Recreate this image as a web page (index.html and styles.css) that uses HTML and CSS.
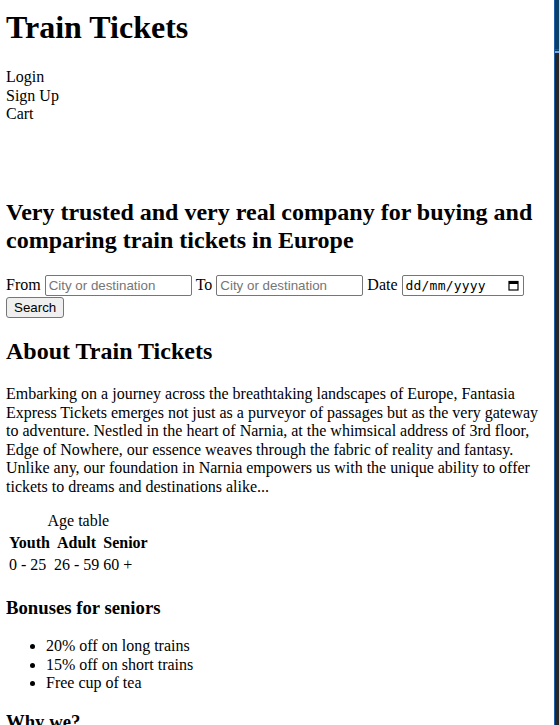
FILE: index.html
```html
<!DOCTYPE html>
<html lang="en">
<head>
<meta charset="utf-8">
<title>Train Tickets</title>
<link rel="stylesheet" href="styles.css">
</head>
<body>
<div class="page">
  <header class="site-header">
    <h1 class="brand">Train Tickets</h1>
    <nav>
      <ul class="nav-list">
        <li>Login</li>
        <li>Sign Up</li>
        <li>Cart</li>
      </ul>
    </nav>
  </header>

  <section class="hero">
    <h2>Very trusted and very real company for buying and comparing train tickets in Europe</h2>
    <form class="search-form">
      <label>From <input class="field" type="text" placeholder="City or destination"></label>
      <label>To <input class="field" type="text" placeholder="City or destination"></label>
      <label>Date <span class="date-field"><input class="date-input" type="text" placeholder="dd/mm/yyyy"><svg class="cal-icon" width="11" height="11" viewBox="0 0 11 11" aria-hidden="true"><rect x="1" y="1.5" width="9" height="8.5" fill="none" stroke="#000" stroke-width="1.2"/><rect x="1" y="1.5" width="9" height="2.5" fill="#000"/></svg></span></label>
      <button type="button" class="search-btn">Search</button>
    </form>
  </section>

  <section class="about">
    <h2>About Train Tickets</h2>
    <p>Embarking on a journey across the breathtaking landscapes of Europe, Fantasia Express Tickets emerges not just as a purveyor of passages but as the very gateway to adventure. Nestled in the heart of Narnia, at the whimsical address of 3rd floor, Edge of Nowhere, our essence weaves through the fabric of reality and fantasy. Unlike any, our foundation in Narnia empowers us with the unique ability to offer tickets to dreams and destinations alike...</p>
    <table>
      <caption>Age table</caption>
      <tr><th>Youth</th><th>Adult</th><th>Senior</th></tr>
      <tr><td>0 - 25</td><td>26 - 59</td><td>60 +</td></tr>
    </table>
    <h3>Bonuses for seniors</h3>
    <ul>
      <li>20% off on long trains</li>
      <li>15% off on short trains</li>
      <li>Free cup of tea</li>
    </ul>
    <h3>Why we?</h3>
  </section>
</div>
<aside class="window-edge" aria-hidden="true">
  <div class="edge-top"></div>
  <div class="edge-accent"></div>
</aside>
</body>
</html>
```

FILE: styles.css
```css
html {
  background: #fff;
}
body {
  margin: 0 13px 0 6px;
  font-family: "Liberation Serif", "Times New Roman", serif;
  font-size: 16px;
  line-height: 1.157;
  color: #000;
  overflow: hidden;
}
.brand {
  margin: 9px 0 0;
  font-size: 32px;
}
.nav-list {
  list-style: none;
  margin: 22px 0 0;
  padding: 0;
}
.hero {
  padding-top: 56px;
}
.hero h2 {
  margin: 19.92px 0;
  font-size: 24px;
}
.search-form {
  margin: 0;
}
.search-form label {
  display: inline-block;
}
.field {
  font-family: "Liberation Sans", Arial, sans-serif;
  font-size: 13.33px;
  width: 147px;
  height: 21px;
  box-sizing: border-box;
  border: 1px solid #767676;
  border-radius: 2px;
  padding: 1px 3px;
  margin: 0;
}
.field::placeholder {
  color: #757575;
}
.date-field {
  display: inline-flex;
  align-items: center;
  width: 122px;
  height: 21px;
  box-sizing: border-box;
  border: 1px solid #767676;
  border-radius: 2px;
  padding: 0 4px 0 3px;
  vertical-align: baseline;
}
.date-input {
  border: 0;
  padding: 0;
  margin: 0;
  width: 96px;
  font-family: "DejaVu Sans Mono", "Liberation Mono", monospace;
  font-size: 13px;
  letter-spacing: 0.2px;
  outline: none;
  background: transparent;
}
.date-input::placeholder {
  color: #000;
}
.cal-icon {
  margin-left: auto;
  display: block;
}
.search-btn {
  font-family: "Liberation Sans", Arial, sans-serif;
  font-size: 13.33px;
  height: 21px;
  margin: 1px 0 0;
  padding: 1px 7px;
  background: #efefef;
  border: 1px solid #767676;
  border-radius: 3px;
  color: #000;
}
.about h2 {
  font-size: 24px;
  margin: 19.92px 0;
}
.about p {
  margin: 16px 0;
}
.about h3 {
  font-size: 18.72px;
  margin: 18.72px 0;
}
.about ul {
  margin: 16px 0;
  padding-left: 40px;
}
.window-edge {
  position: fixed;
  top: 0;
  right: 0;
  width: 5px;
  height: 100%;
  background: #262626;
  border-left: 1px solid #1f5fa6;
  box-sizing: border-box;
}
.edge-top {
  height: 50px;
  background: #0c3f68;
  border-bottom: 1px solid #0c3f68;
  box-shadow: inset 0 -25px 0 -24px #1d5a8a;
}
.edge-accent {
  height: 2px;
  background: #7fa8e0;
}
```
